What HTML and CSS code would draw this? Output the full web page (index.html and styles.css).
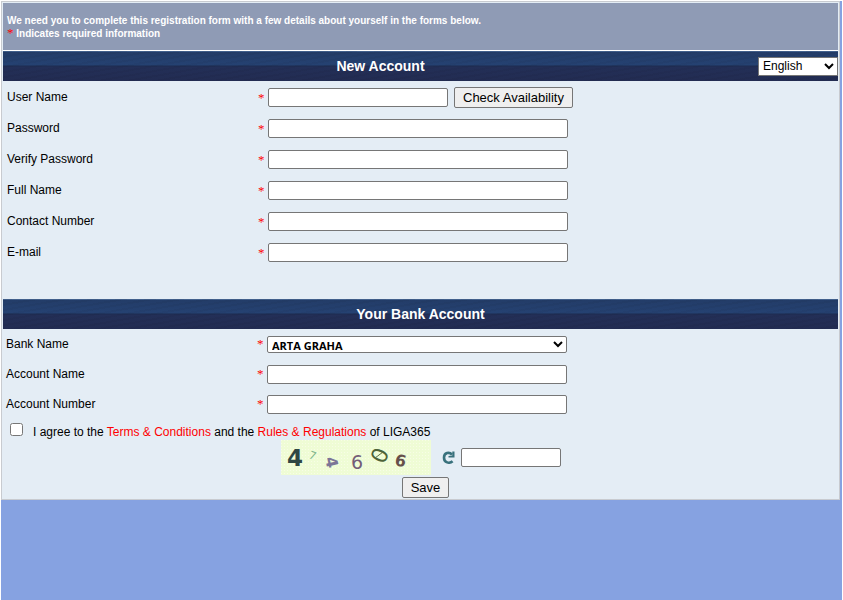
FILE: index.html
```html
<!DOCTYPE html>
<html lang="en">
<head>
    <meta charset="UTF-8">
    <meta name="viewport" content="width=device-width, initial-scale=1.0">
    <title>New Account</title>
    <link rel="stylesheet" href="styles.css">
</head>
<body>
    <form class="register">
        <header class="intro">
            <p>We need you to complete this registration form with a few details about yourself in the forms below.</p>
            <p><span class="star">*</span> Indicates required information</p>
        </header>

        <div class="title-bar">
            <h2>New Account</h2>
            <select class="language" aria-label="Language">
                <option>English</option>
            </select>
        </div>
        <section class="account">
            <div class="row">
                <label for="username">User Name</label>
                <span class="star">*</span>
                <input type="text" id="username" class="short">
                <button type="button" class="btn">Check Availability</button>
            </div>
            <div class="row">
                <label for="password">Password</label>
                <span class="star">*</span>
                <input type="password" id="password">
            </div>
            <div class="row">
                <label for="verify">Verify Password</label>
                <span class="star">*</span>
                <input type="password" id="verify">
            </div>
            <div class="row">
                <label for="fullname">Full Name</label>
                <span class="star">*</span>
                <input type="text" id="fullname">
            </div>
            <div class="row">
                <label for="contact">Contact Number</label>
                <span class="star">*</span>
                <input type="text" id="contact">
            </div>
            <div class="row">
                <label for="email">E-mail</label>
                <span class="star">*</span>
                <input type="text" id="email">
            </div>
        </section>

        <div class="title-bar">
            <h2>Your Bank Account</h2>
        </div>
        <section class="bank">
            <div class="row">
                <label for="bank">Bank Name</label>
                <span class="star">*</span>
                <select id="bank" class="bank-select">
                    <option>ARTA GRAHA</option>
                </select>
            </div>
            <div class="row">
                <label for="accname">Account Name</label>
                <span class="star">*</span>
                <input type="text" id="accname">
            </div>
            <div class="row">
                <label for="accnumber">Account Number</label>
                <span class="star">*</span>
                <input type="text" id="accnumber">
            </div>
        </section>

        <div class="agree">
            <input type="checkbox" id="agree">
            <label for="agree">I agree to the <a href="#">Terms &amp; Conditions</a> and the <a href="#">Rules &amp; Regulations</a> of LIGA365</label>
        </div>

        <div class="captcha">
            <svg class="captcha-image" width="150" height="35" viewBox="0 0 150 35" role="img" aria-label="Captcha">
                <defs>
                    <pattern id="dots" width="3" height="3" patternUnits="userSpaceOnUse">
                        <rect width="3" height="3" fill="#effcd5"/>
                        <rect width="1" height="1" fill="#f7fde6"/>
                    </pattern>
                </defs>
                <rect width="150" height="35" fill="url(#dots)"/>
                <text class="digit-bold" x="6" y="26" font-size="23" fill="#2f4743">4</text>
                <text class="digit" transform="translate(27 18) rotate(20)" font-size="11" fill="#7fb58b">7</text>
                <text class="digit-bold" transform="translate(44 18) rotate(78)" font-size="16" fill="#7c7597">4</text>
                <text class="digit" x="70" y="29" font-size="19" fill="#735d78">6</text>
                <text class="digit" transform="translate(103 25) rotate(-66)" font-size="22" fill="#4d6338">0</text>
                <path d="M94 18l8-6" stroke="#5b7145"/>
                <text class="digit-bold" transform="translate(113 25) rotate(12)" font-size="16" fill="#66504a">6</text>
            </svg>
            <button type="button" class="refresh" aria-label="Refresh">
                <svg width="13" height="13" viewBox="0 0 13 13">
                    <path d="M10.6 10.2C7.5 13 2 11.7 2 6.7 2 1.6 7.3.5 10 3.6" fill="none" stroke="#38717c" stroke-width="2.6"/>
                    <path d="M12.5.6v5.8H6.5V5l3.8-.6V.6z" fill="#38717c"/>
                </svg>
            </button>
            <input type="text" class="code" aria-label="Verification code">
        </div>

        <div class="actions">
            <button type="button" class="btn">Save</button>
        </div>
    </form>
</body>
</html>
```
FILE: styles.css
```css
* {
    margin: 0;
    padding: 0;
    box-sizing: border-box;
}

body {
    min-height: 100vh;
    padding-right: 2px;
    border: 1px solid #fff;
    border-bottom: 0;
    background-color: #86a2e1;
    background-clip: padding-box;
    font-family: "Liberation Sans", Arial, sans-serif;
    font-size: 12px;
    color: #000;
}

html {
    background-color: #fff;
}

.register {
    padding: 1px;
    border: 1px solid #c8cbd0;
    background-color: #e4edf5;
}

.intro {
    padding: 11px 4px 10px;
    border-bottom: 1px solid #fff;
    background-color: #8f9bb5;
    color: #fff;
    font-size: 10px;
    font-weight: bold;
    line-height: 13px;
}

.star {
    color: #f00;
    font-family: "Liberation Serif", serif;
    font-size: 13px;
    font-weight: normal;
    line-height: 12px;
}

.title-bar {
    display: flex;
    align-items: center;
    height: 30px;
    background-color: #222e55;
    background-image:
        repeating-linear-gradient(170deg, rgba(0, 0, 0, 0.04) 0 2px, transparent 2px 5px),
        linear-gradient(#41608c 0 1px, #233c68 1px, #254272 14px, #1d2b50 15px, #232f57 16px, #222c52);
}

.title-bar h2 {
    flex: 1;
    padding-bottom: 1px;
    color: #fff;
    font-size: 14px;
    line-height: 16px;
    text-align: center;
}

.language {
    width: 80px;
    height: 19px;
    border: 1px solid #767676;
    background-color: #fff;
    font-family: inherit;
    font-size: 12px;
}

.account {
    padding: 1px 4px 31px;
}

.bank {
    padding: 0 3px;
}

.row {
    display: flex;
    align-items: center;
    height: 31px;
}

.bank .row {
    height: 30px;
}

.row label {
    width: 251px;
    padding-bottom: 1px;
}

.row .star {
    width: 10px;
}

.row input,
.code {
    width: 300px;
    height: 19px;
    border: 1px solid #767676;
    border-radius: 2px;
    background-color: #fff;
}

.row .short {
    width: 180px;
    margin-right: 6px;
}

.bank-select {
    width: 300px;
    height: 17px;
    border: 1px solid #767676;
    border-radius: 2px;
    background-color: #fff;
    color: #000;
    font-family: "Open Sans", sans-serif;
    font-size: 11px;
    font-weight: bold;
}

.btn {
    height: 21px;
    padding: 0 8px;
    border: 1px solid #767676;
    border-radius: 2px;
    background-color: #efefef;
    color: #000;
    font-family: inherit;
    font-size: 13px;
}

.agree {
    display: flex;
    gap: 10px;
    height: 21px;
    padding: 4px 7px 0;
}

.agree input {
    width: 13px;
    height: 13px;
}

.agree label {
    line-height: 19px;
}

.agree a {
    color: #f00;
    text-decoration: none;
}

.captcha {
    display: flex;
    align-items: center;
    justify-content: center;
}

.digit,
.digit-bold {
    font-family: "DejaVu Sans", sans-serif;
}

.digit-bold {
    font-weight: bold;
}

.refresh {
    display: flex;
    margin: 0 6px 0 11px;
    border: 0;
    background: none;
}

.code {
    width: 100px;
}

.actions {
    display: flex;
    justify-content: center;
    padding: 2px 0 0 10px;
}
```
